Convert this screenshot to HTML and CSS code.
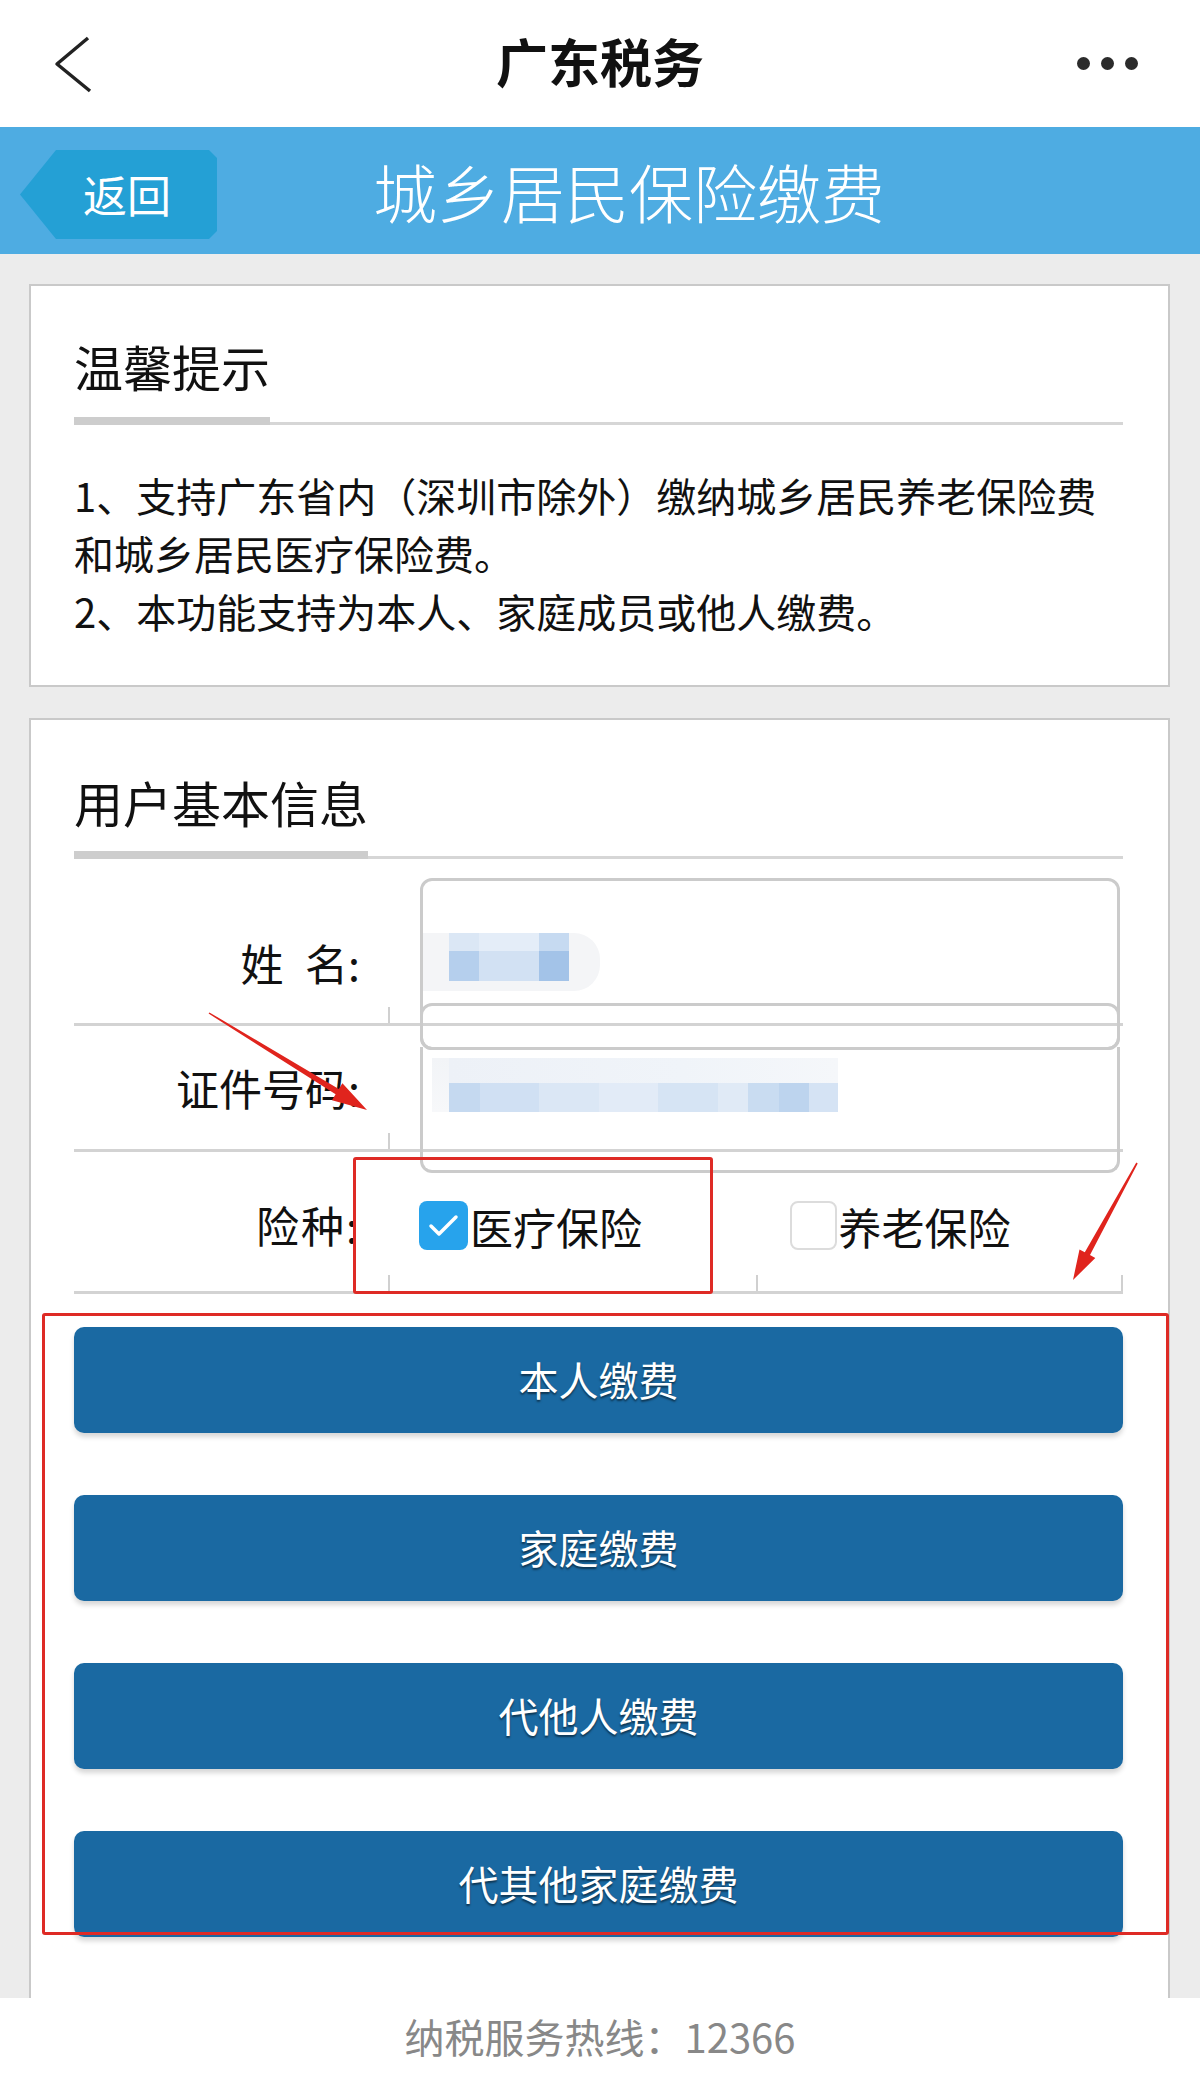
FILE: index.html
```html
<!DOCTYPE html>
<html lang="zh-CN">
<head>
<meta charset="utf-8">
<title>广东税务 - 城乡居民保险缴费</title>
<link rel="stylesheet" href="styles.css">
</head>
<body>
<div class="page">
  <header class="topbar">
    <div class="nav-back">
      <svg width="44" height="60" viewBox="0 0 44 60"><polyline points="36,4 5,30 38,57" fill="none" stroke="#222" stroke-width="3.5" stroke-linejoin="round"/></svg>
    </div>
    <h1 class="app-title">广东税务</h1>
    <div class="dots"><span></span><span></span><span></span></div>
  </header>

  <div class="subhead">
    <div class="back-tab">返回</div>
    <div class="subhead-title">城乡居民保险缴费</div>
  </div>

  <section class="card card-tips">
    <div class="section-head"><h2>温馨提示</h2></div>
    <p class="tips">1、支持广东省内（深圳市除外）缴纳城乡居民养老保险费<br>和城乡居民医疗保险费。<br>2、本功能支持为本人、家庭成员或他人缴费。</p>
  </section>

  <section class="card card-form">
    <div class="section-head head-user"><h2>用户基本信息</h2></div>
    <div class="form">
      <div class="row row-name">
        <div class="label">姓&ensp;名:</div>
        <div class="cell">
          <div class="blur-name">
            <div class="mosaic">
              <i class="n1"></i><i class="n2"></i><i class="n3"></i>
              <i class="n4"></i><i class="n5"></i><i class="n6"></i>
            </div>
          </div>
        </div>
      </div>
      <div class="row row-id">
        <div class="label">证件号码:</div>
        <div class="cell">
          <div class="blur-id"><div class="id-top"></div><div class="id-bottom"></div></div>
        </div>
      </div>
      <div class="row row-type">
        <div class="label label-type">险种:</div>
        <div class="cell opts">
          <label class="opt">
            <span class="box checked"><svg width="49" height="49" viewBox="0 0 49 49"><polyline points="12,25 20,33 37,16" fill="none" stroke="#fff" stroke-width="3.5" stroke-linecap="round" stroke-linejoin="round"/></svg></span>医疗保险
          </label>
          <label class="opt opt2">
            <span class="box"></span>养老保险
          </label>
        </div>
      </div>
      <div class="input-box box-a"></div>
      <div class="input-box box-b"></div>
      <div class="input-box box-c"></div>
    </div>
    <div class="actions">
      <div class="btn">本人缴费</div>
      <div class="btn">家庭缴费</div>
      <div class="btn">代他人缴费</div>
      <div class="btn">代其他家庭缴费</div>
    </div>
  </section>

  <footer class="footer">纳税服务热线：12366</footer>

  <div class="annot">
    <div class="red red1"></div>
    <div class="red red2"></div>
    <svg class="arrows" width="1200" height="2075" viewBox="0 0 1200 2075">
      <polygon fill="#e0241d" points="209.4,1012.4 338.8,1089.1 342.4,1083.2 367,1110 332,1100.2 335.6,1094.3 208.6,1013.6"/>
      <polygon fill="#e0241d" points="1136.3,1162.6 1084.8,1252.3 1079.5,1249.4 1073,1280 1095.3,1258 1090,1255.1 1137.7,1163.4"/>
    </svg>
  </div>
</div>
</body>
</html>
```

FILE: styles.css
```css
html, body {
  margin: 0;
  padding: 0;
}
body {
  background: #ececec;
  font-family: "Noto Sans CJK SC", "Noto Sans", sans-serif;
  color: #111;
}
.page {
  position: relative;
  width: 1200px;
  min-height: 2075px;
}

/* top navigation */
.topbar {
  height: 127px;
  background: #fff;
  display: grid;
  grid-template-columns: 1fr auto 1fr;
  align-items: center;
}
.nav-back {
  padding-left: 52px;
  display: flex;
  align-items: center;
}
.app-title {
  margin: 0 0 6px;
  font-size: 52px;
  font-weight: 700;
  line-height: 1;
  color: #111;
}
.dots {
  justify-self: end;
  padding-right: 62px;
  display: flex;
  gap: 11px;
}
.dots span {
  width: 13px;
  height: 13px;
  border-radius: 50%;
  background: #2b2b2b;
}

/* blue sub header */
.subhead {
  height: 127px;
  background: #4eace2;
  display: flex;
  align-items: flex-start;
}
.back-tab {
  margin: 23px 0 0 20px;
  width: 197px;
  height: 89px;
  box-sizing: border-box;
  padding-left: 63px;
  background: #24a0d5;
  color: #fff;
  font-size: 44px;
  line-height: 89px;
  clip-path: polygon(36px 0, calc(100% - 8px) 0, 100% 8px, 100% calc(100% - 8px), calc(100% - 8px) 100%, 36px 100%, 0 50%);
}
.subhead-title {
  margin: 28px 0 0 156px;
  font-size: 64px;
  line-height: 70px;
  color: #fff;
  font-weight: 300;
  white-space: nowrap;
}

/* cards */
.card {
  margin: 30px 0 0 29px;
  width: 1141px;
  box-sizing: border-box;
  background: #fff;
  border: 2px solid #c9c9c9;
  padding: 50px 45px 41px 43px;
}
.card-form {
  margin-top: 31px;
  padding: 52px 45px 61px 43px;
  border-bottom: none;
}
.section-head {
  display: flex;
  border-bottom: 3px solid #d6d6d6;
}
.section-head h2 {
  margin: 0 0 -3px;
  font-size: 49px;
  font-weight: 400;
  line-height: 60px;
  padding-bottom: 21px;
  border-bottom: 8px solid #cdcdcd;
  color: #111;
}
.head-user h2 {
  padding-bottom: 19px;
}
.tips {
  margin: 41px 0 0;
  font-size: 40px;
  line-height: 58px;
  white-space: nowrap;
  color: #111;
  padding-bottom: 4px;
}

/* form */
.form {
  position: relative;
}
.row {
  display: grid;
  grid-template-columns: 314px 1fr;
  align-items: center;
  border-bottom: 3px solid #d3d3d3;
  box-sizing: border-box;
}
.row-name {
  height: 167px;
  padding-top: 42px;
}
.row-id {
  height: 126px;
}
.row-type {
  height: 142px;
}
.label {
  text-align: right;
  padding-right: 28px;
  font-size: 43px;
  line-height: 1;
  color: #111;
  white-space: nowrap;
}
.label-type {
  letter-spacing: 2px;
  margin-top: 6px;
}
.cell {
  position: relative;
  align-self: stretch;
  display: flex;
  align-items: center;
}
.cell::before {
  content: "";
  position: absolute;
  left: 0;
  bottom: 0;
  width: 2px;
  height: 16px;
  background: #d0d0d0;
}

.blur-name {
  margin-left: 32px;
  width: 180px;
  height: 58px;
  box-sizing: border-box;
  padding-left: 29px;
  background: #f4f5f7;
  border-radius: 0 26px 26px 0;
  display: flex;
  align-items: flex-start;
}
.mosaic {
  display: grid;
  grid-template-columns: 30px 60px 30px;
  grid-template-rows: 18px 30px;
}
.n1 { background: #dbe7f5; }
.n2 { background: #e4edf8; }
.n3 { background: #c6daf1; }
.n4 { background: #b5cfed; }
.n5 { background: #d2e1f3; }
.n6 { background: #a3c3e8; }

.blur-id {
  margin-left: 44px;
  width: 406px;
  box-sizing: border-box;
  padding-left: 17px;
  margin-top: -6px;
  display: flex;
  flex-direction: column;
  background: linear-gradient(#f2f4f7, #f7f8fa);
  border-radius: 0 20px 0 0;
}
.id-top {
  height: 25px;
  background: linear-gradient(90deg, #edf1f7 0, #f0f4f9 60%, #f5f7fa 100%);
}
.id-bottom {
  height: 29px;
  background: linear-gradient(90deg,
    #c5d9f0 0 31px, #d0e0f3 31px 90px, #dbe7f5 90px 150px,
    #e2ebf7 150px 209px, #d6e4f4 209px 269px, #e0eaf6 269px 299px,
    #c9dcf1 299px 330px, #bdd4ee 330px 360px, #d5e3f4 360px 389px);
}

.opts {
  display: grid;
  grid-template-columns: 1fr 1fr;
}
.opts::after {
  content: "";
  position: absolute;
  right: 0;
  bottom: 0;
  width: 2px;
  height: 16px;
  background: #d0d0d0;
}
.opt {
  position: relative;
  display: flex;
  align-items: center;
  align-self: stretch;
  padding-left: 31px;
  font-size: 43px;
  color: #111;
  margin-top: 8px;
}
.opt2 {
  padding-left: 34px;
}
.opt2::before {
  content: "";
  position: absolute;
  left: 0;
  bottom: 0;
  width: 2px;
  height: 16px;
  background: #d0d0d0;
}
.box {
  width: 49px;
  height: 49px;
  box-sizing: border-box;
  border-radius: 8px;
  border: 2px solid #dcdcdc;
  background: #fff;
  margin-right: 2px;
  flex: none;
}
.opt2 .box {
  width: 47px;
}
.box.checked {
  border: none;
  background: #27a3ec;
}
.box svg {
  display: block;
}

.input-box {
  position: absolute;
  left: 346px;
  width: 700px;
  box-sizing: border-box;
  border: 3px solid #cbcbcb;
  border-radius: 12px;
  pointer-events: none;
}
.box-a {
  top: 19px;
  height: 172px;
}
.box-b {
  top: 144px;
  height: 47px;
}
.box-c {
  top: 188px;
  height: 126px;
  border-top: none;
  border-radius: 0 0 12px 12px;
}

/* buttons */
.actions {
  padding-top: 33px;
  display: flex;
  flex-direction: column;
  gap: 62px;
}
.btn {
  height: 106px;
  display: flex;
  align-items: center;
  justify-content: center;
  background: #1a69a2;
  border-radius: 10px;
  color: #fff;
  font-size: 40px;
  padding-bottom: 3px;
  box-sizing: border-box;
  text-shadow: 0 2px 2px rgba(0, 0, 0, 0.5);
  box-shadow: 0 4px 5px rgba(0, 0, 0, 0.16);
}

/* footer */
.footer {
  height: 77px;
  background: #fff;
  text-align: center;
  font-size: 40px;
  line-height: 77px;
  color: #888;
}

/* red annotation overlay */
.annot {
  position: absolute;
  left: 0;
  top: 0;
  width: 1200px;
  height: 2075px;
  pointer-events: none;
}
.red {
  position: absolute;
  box-sizing: border-box;
  border: 3px solid #de2a25;
  border-radius: 3px;
}
.red1 {
  left: 353px;
  top: 1157px;
  width: 360px;
  height: 137px;
}
.red2 {
  left: 42px;
  top: 1313px;
  width: 1127px;
  height: 622px;
}
.arrows {
  position: absolute;
  left: 0;
  top: 0;
}
```
